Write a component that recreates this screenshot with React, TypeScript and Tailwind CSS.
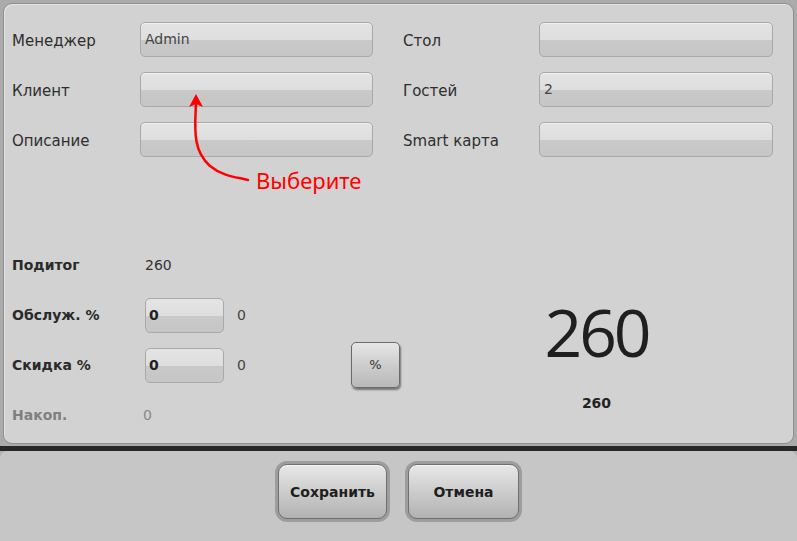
import React from 'react';

const font = { fontFamily: '"DejaVu Sans", "Noto Sans", sans-serif' };

function Field({ value }: { value?: string }) {
    return (
        <div className="h-[35px] rounded-[5px] border border-[#a9a9a9] bg-[linear-gradient(to_bottom,#e4e4e4_0%,#dedede_50%,#c9c9c9_52%,#c6c6c6_100%)] shadow-[inset_0_1px_0_#f0f0f0] flex items-center px-[4px] text-[14px] text-[#444]">
            {value}
        </div>
    );
}

function SmallField({ value }: { value: string }) {
    return (
        <div className="w-[79px] h-[35px] rounded-[5px] border border-[#a9a9a9] bg-[linear-gradient(to_bottom,#e4e4e4_0%,#dedede_50%,#c9c9c9_52%,#c6c6c6_100%)] flex items-center px-[3px] text-[14px] font-bold text-[#222]">
            {value}
        </div>
    );
}

function BigButton({ label, width }: { label: string; width: string }) {
    return (
        <div className={`${width} h-[61px] rounded-[12px] bg-[#9d9d9d] p-[3px]`}>
            <div className="w-full h-full rounded-[9px] border border-[#6f6f6f] bg-[linear-gradient(to_bottom,#e8e8e8_0%,#cfcfcf_45%,#b2b2b2_100%)] shadow-[inset_0_1px_0_#f6f6f6] flex items-center justify-center pt-[2px] text-[14px] font-bold text-[#1e1e1e]">
                {label}
            </div>
        </div>
    );
}

const topRows = [
    { left: 'Менеджер', leftValue: 'Admin', right: 'Стол', rightValue: '' },
    { left: 'Клиент', leftValue: '', right: 'Гостей', rightValue: '2' },
    { left: 'Описание', leftValue: '', right: 'Smart карта', rightValue: '' },
];

export default function App() {
    return (
        <div className="w-[797px] h-[541px] flex flex-col bg-[#b4b4b4] overflow-hidden relative" style={font}>
            {/* Main panel */}
            <div className="px-[3px] pt-[3px] pb-[2px] bg-[#ababab]">
                <div className="h-[441px] rounded-[9px] border border-[#8e8e8e] bg-[#d2d2d2] shadow-[inset_1px_1px_0_#e4e4e4] pl-[8px] pt-[18px]">
                    <div className="flex flex-col gap-[15px]">
                        {topRows.map((row) => (
                            <div key={row.left} className="flex items-center">
                                <div className="w-[128px] pt-[3px] text-[15px] text-[#2e2e2e]">{row.left}</div>
                                <div className="w-[233px]"><Field value={row.leftValue} /></div>
                                <div className="w-[136px] ml-[30px] pt-[3px] text-[15px] text-[#2e2e2e]">{row.right}</div>
                                <div className="w-[234px]"><Field value={row.rightValue} /></div>
                            </div>
                        ))}
                    </div>

                    {/* Totals */}
                    <div className="flex mt-[83px]">
                        <div className="w-[388px] flex flex-col">
                            <div className="h-[50px] flex items-center">
                                <div className="w-[133px] text-[14px] font-bold text-[#2a2a2a]">Подитог</div>
                                <div className="text-[14px] text-[#333]">260</div>
                            </div>
                            <div className="h-[50px] flex items-center">
                                <div className="w-[133px] text-[14px] font-bold text-[#2a2a2a]">Обслуж. %</div>
                                <SmallField value="0" />
                                <div className="ml-[13px] text-[14px] text-[#444]">0</div>
                            </div>
                            <div className="h-[50px] flex items-center">
                                <div className="w-[133px] text-[14px] font-bold text-[#2a2a2a]">Скидка %</div>
                                <SmallField value="0" />
                                <div className="ml-[13px] w-[114px] text-[14px] text-[#444]">0</div>
                                <div className="w-[49px] h-[46px] rounded-[5px] border border-[#6a6a6a] bg-[linear-gradient(to_bottom,#e6e6e6_0%,#cdcdcd_50%,#b9b9b9_100%)] shadow-[1px_2px_2px_rgba(0,0,0,0.45)] flex items-center justify-center text-[13px] text-[#333]">
                                    %
                                </div>
                            </div>
                            <div className="h-[50px] flex items-center">
                                <div className="w-[131px] text-[14px] font-bold text-[#808080]">Накоп.</div>
                                <div className="text-[14px] text-[#888]">0</div>
                            </div>
                        </div>
                        <div className="flex-1 flex flex-col items-center pt-[58px]">
                            <div className="text-[66px] leading-none text-[#1f1f1f] tracking-[-3px]" style={{ fontFamily: '"Open Sans", sans-serif' }}>260</div>
                            <div className="mt-[29px] text-[14px] font-bold text-[#222]">260</div>
                        </div>
                    </div>
                </div>
            </div>

            {/* Divider */}
            <div className="h-[5px] bg-[#272727]" />

            {/* Action bar */}
            <div className="flex-1 rounded-t-[8px] bg-[#c6c6c6] flex justify-center gap-[15px] pt-[10px]">
                <BigButton label="Сохранить" width="w-[115px]" />
                <BigButton label="Отмена" width="w-[117px]" />
            </div>

            {/* Hint arrow */}
            <div className="absolute left-[180px] top-[88px] w-[200px] h-[110px] pointer-events-none">
                <svg width="80" height="100" viewBox="0 0 80 100" className="absolute left-0 top-0">
                    <path d="M16 14 C15 40 12 62 30 78 C42 88 56 89 68 92" fill="none" stroke="#ff0000" strokeWidth="2.5" strokeLinecap="round" />
                    <path d="M16 6 L9 19 L16 16 L23 19 Z" fill="#ff0000" />
                </svg>
                <div className="absolute left-[76px] top-[81px] text-[22px] leading-none text-[#ff0000]" style={{ fontFamily: '"Noto Sans", sans-serif' }}>Выберите</div>
            </div>
        </div>
    );
}
